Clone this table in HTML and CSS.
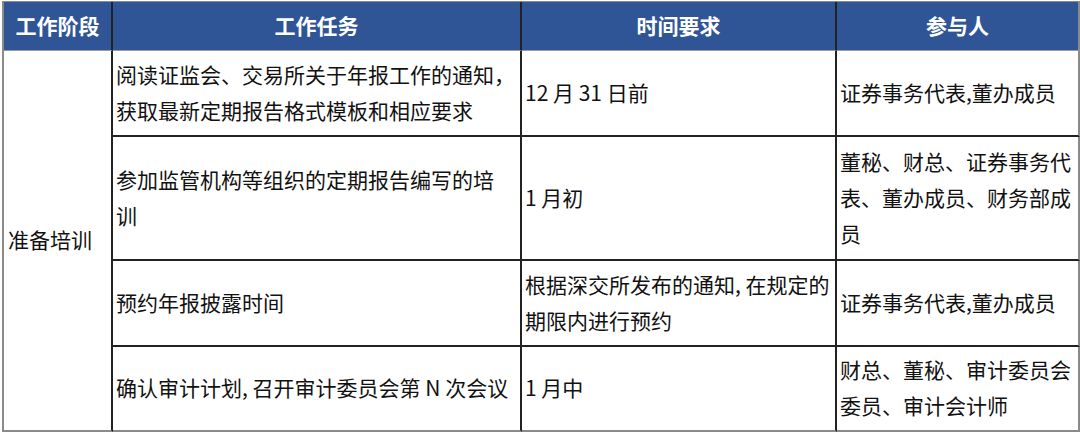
FILE: index.html
```html
<!DOCTYPE html>
<html lang="zh-CN">
<head>
<meta charset="utf-8">
<title>年报工作计划</title>
<link rel="stylesheet" href="styles.css">
</head>
<body>
<div class="wrap">
<table class="plan">
  <colgroup>
    <col class="c-stage">
    <col class="c-task">
    <col class="c-time">
    <col class="c-who">
  </colgroup>
  <thead>
    <tr class="head">
      <th class="first">工作阶段</th>
      <th>工作任务</th>
      <th>时间要求</th>
      <th class="last">参与人</th>
    </tr>
  </thead>
  <tbody>
    <tr class="r-a">
      <td class="first stage" rowspan="4">准备培训</td>
      <td>阅读证监会、交易所关于年报工作的通知，获取最新定期报告格式模板和相应要求</td>
      <td>12 月 31 日前</td>
      <td class="last">证券事务代表,董办成员</td>
    </tr>
    <tr class="r-b">
      <td>参加监管机构等组织的定期报告编写的培<br>训</td>
      <td>1 月初</td>
      <td class="last">董秘、财总、证券事务代表、董办成员、财务部成员</td>
    </tr>
    <tr class="r-a">
      <td>预约年报披露时间</td>
      <td>根据深交所发布的通知, 在规定的期限内进行预约</td>
      <td class="last">证券事务代表,董办成员</td>
    </tr>
    <tr class="r-a end">
      <td>确认审计计划, 召开审计委员会第 N 次会议</td>
      <td>1 月中</td>
      <td class="last">财总、董秘、审计委员会委员、审计会计师</td>
    </tr>
  </tbody>
</table>
</div>
</body>
</html>
```
FILE: styles.css
```css
html, body {
  margin: 0;
  padding: 0;
  background: #ffffff;
}

.wrap {
  padding: 1px 0 0 2px;
}

.plan {
  width: 1076px;
  table-layout: fixed;
  border-collapse: separate;
  border-spacing: 0;
  border-top: 1px solid #8a8a8a;
  border-left: 2px solid #8a8a8a;
  font-family: "Noto Sans CJK SC", "Noto Sans", sans-serif;
  font-size: 21px;
  color: #111111;
}

.c-stage { width: 109px; }
.c-task { width: 409px; }
.c-time { width: 315px; }
.c-who { width: 243px; }

.plan th,
.plan td {
  border-right: 2px solid #222222;
  border-bottom: 2px solid #222222;
  box-sizing: border-box;
}

.plan th {
  background: #2f5597;
  color: #ffffff;
  font-weight: 700;
  text-align: center;
  height: 49px;
  padding: 0 0 2px;
  line-height: 28px;
  border-bottom: 1px solid #9a9a9a;
}

.plan td {
  text-align: left;
  vertical-align: middle;
  padding: 0 1px 3px 3px;
  line-height: 36px;
  word-break: break-all;
}

.plan .last {
  border-right: 2px solid #8a8a8a;
}

.plan .stage {
  padding-left: 4px;
  border-bottom: 2px solid #8a8a8a;
}

.plan .end td {
  border-bottom: 2px solid #8a8a8a;
}

.r-a { height: 86px; }
.r-b { height: 124px; }
.end { height: 85px; }
```
